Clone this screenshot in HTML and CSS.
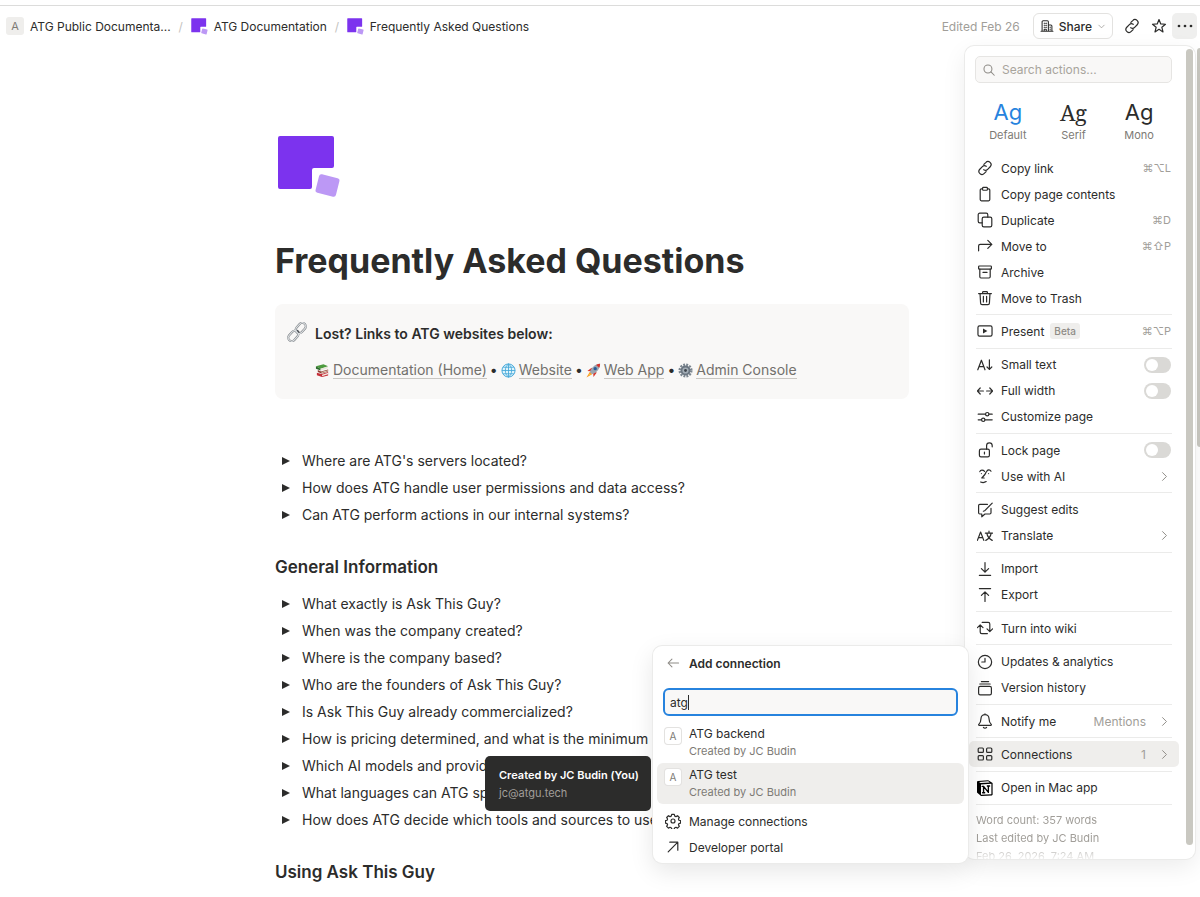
FILE: index.html
```html
<!DOCTYPE html>
<html lang="en">
<head>
    <meta charset="UTF-8">
    <meta name="viewport" content="width=device-width, initial-scale=1.0">
    <title>Frequently Asked Questions</title>
    <link rel="stylesheet" href="styles.css">
</head>
<body>
    <!-- Shared icons -->
    <svg class="sprite" aria-hidden="true">
        <symbol id="logo" viewBox="0 0 64 64">
            <path fill="#7c33ee" d="M3 1h52a2 2 0 0 1 2 2v28a2 2 0 0 1-2 2H37a2 2 0 0 0-2 2v17a2 2 0 0 1-2 2H3a2 2 0 0 1-2-2V3a2 2 0 0 1 2-2z"/>
            <rect fill="#bc98f5" x="40" y="41" width="21" height="19" rx="2.5" transform="rotate(14 50.5 50.5)"/>
        </symbol>
        <symbol id="link" viewBox="0 0 20 20">
            <path d="M8.600 5.500l2.300-2.300a3.700 3.700 0 0 1 5.600 5.200l-3.200 3.300a3.700 3.700 0 0 1-4.800.4"/>
            <path d="M11.400 14.500l-2.300 2.300a3.700 3.700 0 0 1-5.600-5.200l3.200-3.300a3.700 3.700 0 0 1 4.800-.4"/>
        </symbol>
        <symbol id="chevron" viewBox="0 0 20 20"><path d="M7 4l6 6-6 6"/></symbol>
    </svg>

    <header class="topbar">
        <nav class="breadcrumb" aria-label="Breadcrumb">
            <a href="#" class="crumb"><span class="letter">A</span>ATG Public Documenta...</a>
            <span class="slash">/</span>
            <a href="#" class="crumb"><svg class="crumb-logo"><use href="#logo"/></svg>ATG Documentation</a>
            <span class="slash">/</span>
            <a href="#" class="crumb"><svg class="crumb-logo"><use href="#logo"/></svg>Frequently Asked Questions</a>
        </nav>
        <div class="tools">
            <span class="edited">Edited Feb 26</span>
            <button class="share">
                <svg class="icon small" viewBox="0 0 20 20"><path d="M1.500 17.500h17M3 17.500V4a1.500 1.500 0 0 1 1.500-1.500h6A1.500 1.500 0 0 1 12 4v13.500M12 8.500h3.500A1.500 1.500 0 0 1 17 10v7.500M6 17.500v-3h3v3M6 6h1M8.500 6h1M6 9h1M8.500 9h1M6 11.800h1M8.500 11.800h1M14.500 11.500v1M14.500 14.500v1"/></svg>
                Share
                <svg class="icon caret" viewBox="0 0 20 20"><path d="M4 7l6 6 6-6"/></svg>
            </button>
            <button class="tool" aria-label="Copy link"><svg class="icon"><use href="#link"/></svg></button>
            <button class="tool" aria-label="Favorite"><svg class="icon" viewBox="0 0 20 20"><path d="M10 1.900l2.200 5.500 5.900.4-4.500 3.800 1.400 5.800-5-3.200-5 3.200 1.400-5.800L1.900 7.800l5.900-.4z"/></svg></button>
            <button class="tool active" aria-label="More"><svg class="icon solid" viewBox="0 0 20 20"><circle cx="2.500" cy="10" r="1.700"/><circle cx="10" cy="10" r="1.700"/><circle cx="17.500" cy="10" r="1.700"/></svg></button>
        </div>
    </header>

    <main class="page">
        <article class="content">
            <svg class="page-logo"><use href="#logo"/></svg>
            <h1>Frequently Asked Questions</h1>

            <section class="callout">
                <svg class="callout-icon" viewBox="0 0 20 20">
                    <g fill="none" stroke="#777c81" stroke-width="2.200"><rect x="8" y="2.600" width="11.500" height="7" rx="3.500" transform="rotate(-48 13.700 6.100)"/><rect x="0.500" y="10.400" width="11.500" height="7" rx="3.500" transform="rotate(-48 6.300 13.900)"/></g>
                    <g fill="none" stroke="#dfe2e4" stroke-width="1.100"><rect x="8" y="2.600" width="11.500" height="7" rx="3.500" transform="rotate(-48 13.700 6.100)"/><rect x="0.500" y="10.400" width="11.500" height="7" rx="3.500" transform="rotate(-48 6.300 13.900)"/></g>
                    <path d="M10.500 8.500l1.500 1.800" stroke="#4d5156" stroke-width="1.400" stroke-linecap="round"/>
                </svg>
                <div class="callout-body">
                    <p class="callout-title">Lost? Links to ATG websites below:</p>
                    <p class="callout-links">
                        <svg class="emoji" viewBox="0 0 16 16"><path fill="#4d9a3e" d="M1 3.500l8-2.300 5 2.300-8 2.600z"/><path fill="#2c6b2c" d="M1 3.500l5 2.600v2L1 6z"/><path fill="#e8e4da" d="M6 6.100l7.500-2.400v1.800L6 8z"/><path fill="#8d3f35" d="M3 7.500l3.500 1.500 7.500-2v2l-7 2.200-4-1.700z"/><path fill="#f0dfc8" d="M7 9.600l7-2v1l-7 2z"/><path fill="#c62f39" d="M2 10.300l5 1.500 7-2.100v3.500L7.500 15 2 13z"/><path fill="#f1e5dd" d="M7.500 12.500l6.500-2v1.500l-6.500 2z"/></svg>
                        <a href="#">Documentation (Home)</a> <span>•</span>
                        <svg class="emoji" viewBox="0 0 16 16"><circle cx="8" cy="8" r="7" fill="#dff4fc" stroke="#43a6d8"/><path d="M8 1v14M1 8h14M2.300 4.500h11.400M2.300 11.500h11.400M8 1C3.500 4 3.500 12 8 15M8 1c4.500 3 4.500 11 0 14" fill="none" stroke="#43a6d8" stroke-width=".9"/></svg>
                        <a href="#">Website</a> <span>•</span>
                        <svg class="emoji" viewBox="0 0 16 16"><path fill="#d8342c" d="M1.500 8.500L6 5l1.500 4zM8 15l3.500-5-4-1z"/><path fill="#9aa6b2" d="M4 10C5.500 5 9.500 1 15 .8 15.200 6 11.500 10.500 6.500 12z"/><path fill="#d8342c" d="M10.800 2.200A8 8 0 0 1 15 .8a8 8 0 0 1-.9 4.200z"/><circle cx="9.800" cy="6" r="1.800" fill="#275b94"/><path fill="#f79420" d="M4 9.700l2.500 2.300L.5 15.500z"/><path fill="#ffd33d" d="M4.200 10.800l1.100 1.100L2.500 13.500z"/></svg>
                        <a href="#">Web App</a> <span>•</span>
                        <svg class="emoji" viewBox="0 0 16 16"><circle cx="8" cy="8" r="6.200" fill="none" stroke="#7b8690" stroke-width="2.600" stroke-dasharray="2 1.250"/><circle cx="8" cy="8" r="4.300" fill="#a3adb6" stroke="#6b7681" stroke-width="2"/><circle cx="8" cy="8" r="1.500" fill="#3c444c"/></svg>
                        <a href="#">Admin Console</a>
                    </p>
                </div>
            </section>

            <div class="toggles">
                <details><summary>Where are ATG's servers located?</summary></details>
                <details><summary>How does ATG handle user permissions and data access?</summary></details>
                <details><summary>Can ATG perform actions in our internal systems?</summary></details>
            </div>

            <h2>General Information</h2>
            <div class="toggles">
                <details><summary>What exactly is Ask This Guy?</summary></details>
                <details><summary>When was the company created?</summary></details>
                <details><summary>Where is the company based?</summary></details>
                <details><summary>Who are the founders of Ask This Guy?</summary></details>
                <details><summary>Is Ask This Guy already commercialized?</summary></details>
                <details><summary>How is pricing determined, and what is the minimum s</summary></details>
                <details><summary>Which AI models and providers does ATG use</summary></details>
                <details><summary>What languages can ATG speak?</summary></details>
                <details><summary>How does ATG decide which tools and sources to use?</summary></details>
            </div>

            <h2>Using Ask This Guy</h2>
        </article>
    </main>
    <div class="page-scroll"></div>

    <!-- Page actions menu -->
    <aside class="menu">
        <div class="menu-body">
            <label class="search">
                <svg class="icon" viewBox="0 0 20 20"><circle cx="8.500" cy="8.500" r="5.700"/><path d="M12.800 12.800l4.700 4.700"/></svg>
                <input type="text" placeholder="Search actions..." aria-label="Search actions">
            </label>
            <div class="fonts">
                <button class="font selected"><span class="sample">Ag</span>Default</button>
                <button class="font"><span class="sample serif">Ag</span>Serif</button>
                <button class="font"><span class="sample mono">Ag</span>Mono</button>
            </div>

            <div class="groups">
                <div class="group">
                    <button class="item"><svg class="icon"><use href="#link"/></svg>Copy link<kbd>⌘⌥L</kbd></button>
                    <button class="item"><svg class="icon" viewBox="0 0 20 20"><path d="M7 3.500H5.500A1.500 1.500 0 0 0 4 5v12a1.500 1.500 0 0 0 1.500 1.500h9A1.500 1.500 0 0 0 16 17V5a1.500 1.500 0 0 0-1.500-1.500H13M7 2.800a1 1 0 0 1 1-1h4a1 1 0 0 1 1 1v1.500a1 1 0 0 1-1 1H8a1 1 0 0 1-1-1z"/></svg>Copy page contents</button>
                    <button class="item"><svg class="icon" viewBox="0 0 20 20"><rect x="6.500" y="6.500" width="12" height="12" rx="2"/><path d="M6.500 13.500h-3a2 2 0 0 1-2-2v-8a2 2 0 0 1 2-2h8a2 2 0 0 1 2 2v3"/></svg>Duplicate<kbd>⌘D</kbd></button>
                    <button class="item"><svg class="icon" viewBox="0 0 20 20"><path d="M2 16V10a2 2 0 0 1 2-2h14.500M13.500 3l5 5-5 5"/></svg>Move to<kbd>⌘⇧P</kbd></button>
                    <button class="item"><svg class="icon" viewBox="0 0 20 20"><rect x="2" y="2.500" width="16" height="4" rx="1"/><path d="M3.500 6.500V16A1.500 1.500 0 0 0 5 17.500h10a1.500 1.500 0 0 0 1.500-1.500V6.500M7.500 10.500h5"/></svg>Archive</button>
                    <button class="item"><svg class="icon" viewBox="0 0 20 20"><path d="M2 4.500h16M7 4.500V3a1 1 0 0 1 1-1h4a1 1 0 0 1 1 1v1.500M3.800 4.500l.7 12A1.800 1.800 0 0 0 6.300 18.200h7.400a1.800 1.800 0 0 0 1.800-1.700l.7-12M8 8v7M12 8v7"/></svg>Move to Trash</button>
                </div>
                <hr>
                <div class="group">
                    <button class="item"><svg class="icon" viewBox="0 0 20 20"><rect x="1.200" y="3.500" width="17.600" height="13" rx="2"/><path class="fill" d="M7.500 7v6l5.500-3z"/></svg>Present <span class="beta">Beta</span><kbd>⌘⌥P</kbd></button>
                </div>
                <hr>
                <div class="group">
                    <label class="item"><svg class="icon" viewBox="0 0 20 20"><path d="M1 16L5.500 4 10 16M2.500 12h6M15.500 3.500v12M12.500 12.500l3 3 3-3"/></svg>Small text<input type="checkbox" class="switch"></label>
                    <label class="item"><svg class="icon" viewBox="0 0 20 20"><path d="M8 10H.500M4 6.200L.300 10 4 13.800M12 10h7.500M16 6.200l3.700 3.800-3.700 3.800"/></svg>Full width<input type="checkbox" class="switch"></label>
                    <button class="item"><svg class="icon" viewBox="0 0 20 20"><path d="M1.500 6.500h9M15 6.500h4M1.500 13.500h4M10 13.500h9"/><circle cx="12.800" cy="6.500" r="2.100"/><circle cx="7.800" cy="13.500" r="2.100"/></svg>Customize page</button>
                </div>
                <hr>
                <div class="group">
                    <label class="item"><svg class="icon" viewBox="0 0 20 20"><rect x="3" y="9" width="12.500" height="9.500" rx="2"/><path d="M12 9V4.500a3.500 3.500 0 0 1 7 0V6M9.300 12.500v2.500"/></svg>Lock page<input type="checkbox" class="switch"></label>
                    <button class="item"><svg class="icon" viewBox="0 0 20 20"><path d="M3.500 4.500C4.500 2 7.500 2 9.500 4.200M12 4.500c1-2.500 4-3 5.500-.5M11.500 5c-1 3-2.800 4.500-5.500 7.500h3M4.500 17.500c2.500 1 5 .8 7-.500"/><circle class="fill" cx="5.500" cy="7" r=".7"/><circle class="fill" cx="14.500" cy="7" r=".7"/></svg>Use with AI<svg class="icon next"><use href="#chevron"/></svg></button>
                </div>
                <hr>
                <div class="group">
                    <button class="item"><svg class="icon" viewBox="0 0 20 20"><path d="M13 3H3.500A1.500 1.500 0 0 0 2 4.500v9A1.500 1.500 0 0 0 3.500 15H6v3.500L10 15h6a1.500 1.500 0 0 0 1.500-1.500V8M19 1.500L9.500 11l-1.500.5"/></svg>Suggest edits</button>
                    <button class="item"><svg class="icon" viewBox="0 0 20 20"><path d="M.500 15.500L4.500 5l4 10.500M2 12h5M10.500 6.500h9M15 4v2.500M12.300 6.500c.5 3.500 3 7 6.700 9M17.700 6.500c-.5 3.500-3 7-6.700 9"/></svg>Translate<svg class="icon next"><use href="#chevron"/></svg></button>
                </div>
                <hr>
                <div class="group">
                    <button class="item"><svg class="icon" viewBox="0 0 20 20"><path d="M10 2v12M5.500 9.500L10 14l4.500-4.500M3 18h14"/></svg>Import</button>
                    <button class="item"><svg class="icon" viewBox="0 0 20 20"><path d="M10 18V6M5.500 10.500L10 6l4.500 4.500M3 2h14"/></svg>Export</button>
                </div>
                <hr>
                <div class="group">
                    <button class="item"><svg class="icon" viewBox="0 0 20 20"><path d="M6.500 3H14a2 2 0 0 1 2 2v9M12.500 11l3.500 3.500 3.500-3.500M13 17H6a2 2 0 0 1-2-2V6.500M.500 9.500L4 6l3.500 3.500"/></svg>Turn into wiki</button>
                </div>
                <hr>
                <div class="group">
                    <button class="item"><svg class="icon" viewBox="0 0 20 20"><circle cx="10" cy="10" r="8.300"/><path d="M10 5.500V10H6"/></svg>Updates &amp; analytics</button>
                    <button class="item"><svg class="icon" viewBox="0 0 20 20"><rect x="2" y="8" width="16" height="10.500" rx="2"/><path d="M3.500 5h13M5.500 2h9"/></svg>Version history</button>
                </div>
                <hr>
                <div class="group">
                    <button class="item"><svg class="icon" viewBox="0 0 20 20"><path d="M10 2a5 5 0 0 0-5 5c0 4-1 5.500-2.800 7.200a.8.8 0 0 0 .6 1.300h14.400a.8.8 0 0 0 .6-1.300C16 12.500 15 11 15 7a5 5 0 0 0-5-5zM10 2V1M8 18a2.500 2.500 0 0 0 4 0"/></svg>Notify me<span class="value">Mentions</span><svg class="icon next"><use href="#chevron"/></svg></button>
                </div>
                <hr>
                <div class="group">
                    <button class="item current"><svg class="icon" viewBox="0 0 20 20"><rect x="1.500" y="2.500" width="6.500" height="5.500" rx="1.200"/><rect x="12" y="2.500" width="6.500" height="5.500" rx="1.200"/><rect x="1.500" y="12" width="6.500" height="5.500" rx="1.200"/><rect x="12" y="12" width="6.500" height="5.500" rx="1.200"/></svg>Connections<span class="value">1</span><svg class="icon next"><use href="#chevron"/></svg></button>
                </div>
                <hr>
                <div class="group">
                    <button class="item"><svg class="icon" viewBox="0 0 20 20"><path fill="#000" stroke="none" d="M0 2.500Q0 1.300 1.200 1.200L14 .300 19.500 3.800V18.200Q19.500 19.200 18.500 19.300L5 20 0 15.500z"/><path fill="#fff" stroke="none" d="M2.500 2.500L14 1.700l2 1.300-11.500.8zM5 5.500l13-.8v13l-13 .8z"/><path fill="none" stroke="#000" stroke-width="1.700" d="M8.200 15.800V8l6 7.500V7.500M6.500 8h2M7 16h2.600M12.900 7.500h2.800"/></svg>Open in Mac app</button>
                </div>
                <hr>
            </div>

            <footer class="meta">
                <p>Word count: 357 words</p>
                <p>Last edited by JC Budin</p>
                <p>Feb 26, 2026, 7:24 AM</p>
            </footer>
        </div>
        <div class="menu-scroll"></div>
    </aside>

    <!-- Add connection submenu -->
    <section class="submenu">
        <div class="submenu-head">
            <button class="back" aria-label="Back"><svg class="icon" viewBox="0 0 20 20"><path d="M18 10H3M8.500 4.500L3 10l5.500 5.500"/></svg></button>
            <h3>Add connection</h3>
        </div>
        <div class="field">
            <input type="text" value="atg" aria-label="Search connections" class="query" size="3">
            <span class="cursor"></span>
        </div>
        <button class="connection"><span class="letter outlined">A</span><span class="about">ATG backend<small>Created by JC Budin</small></span></button>
        <button class="connection current"><span class="letter outlined">A</span><span class="about">ATG test<small>Created by JC Budin</small></span></button>
        <div class="submenu-links">
            <a href="#" class="item"><svg class="icon" viewBox="0 0 20 20"><path d="M8.400 1.700h3.200l.6 2.200 1.500.6 2-1.100 2.200 2.200-1.100 2 .6 1.500 2.100.5v3l-2.100.6-.6 1.500 1.100 2-2.200 2.200-2-1.100-1.500.6-.6 2H8.400l-.6-2-1.500-.6-2 1.100-2.200-2.200 1.100-2-.6-1.500-2-.6v-3l2-.5.6-1.500-1.100-2 2.200-2.200 2 1.100 1.500-.6z"/><circle cx="10" cy="10" r="2.500"/></svg>Manage connections</a>
            <a href="#" class="item"><svg class="icon" viewBox="0 0 20 20"><path d="M4 16L16 4M6 4h10v10"/></svg>Developer portal</a>
        </div>
    </section>

    <div class="tooltip" role="tooltip">
        <strong>Created by JC Budin (You)</strong>
        <span>jc@atgu.tech</span>
    </div>
</body>
</html>
```
FILE: styles.css
```css
* {
    box-sizing: border-box;
}
body {
    position: relative;
    margin: 0;
    height: 100vh;
    overflow: hidden;
    font-family: Inter, "Liberation Sans", sans-serif;
    font-size: 12px;
    color: #2c2c2b;
    background: #fff;
}
h1, h2, h3, p { margin: 0; }
a { color: inherit; text-decoration: none; }
button, input, kbd {
    font: inherit;
    color: inherit;
}
button {
    border: none;
    background: none;
    padding: 0;
    cursor: pointer;
}
.sprite { display: none; }
.icon {
    width: 16px;
    height: 16px;
    flex: none;
    fill: none;
    stroke: currentColor;
    stroke-width: 1.5;
    stroke-linecap: round;
    stroke-linejoin: round;
}
.icon.solid, .fill { fill: currentColor; stroke: none; }

/* Top bar */
.topbar {
    display: flex;
    justify-content: space-between;
    align-items: center;
    height: 41px;
    margin-top: 5px;
    padding: 0 3px 0 6px;
    border-top: 1px solid #dcdcdb;
}
.breadcrumb, .crumb, .tools, .share {
    display: flex;
    align-items: center;
}
.breadcrumb { font-size: 12px; }
.crumb { gap: 6px; }
.slash {
    width: 20px;
    text-align: center;
    color: #c4c3c0;
}
.letter {
    display: flex;
    align-items: center;
    justify-content: center;
    width: 18px;
    height: 18px;
    border-radius: 3px;
    font-size: 11px;
    color: #7d7a75;
    background: #efeeec;
}
.crumb-logo { width: 17px; height: 17px; }
.edited {
    margin-right: 13px;
    color: #a19e99;
}
.share {
    gap: 5px;
    height: 26px;
    margin-right: 5px;
    padding: 0 6px;
    border: 1px solid #e3e2e0;
    border-radius: 6px;
    font-weight: 500;
}
.icon.small { width: 14px; height: 14px; }
.icon.caret { width: 9px; height: 9px; color: #8e8b86; }
.tool {
    display: flex;
    align-items: center;
    justify-content: center;
    width: 27px;
    height: 26px;
    border-radius: 5px;
}
.tool.active { width: 25px; background: #efefee; }

/* Document */
.page {
    padding: 89px 16px 0 0;
    color: #2c2c2b;
}
.content {
    max-width: 634px;
    margin: 0 auto;
    font-size: 14px;
}
.page-logo {
    display: block;
    width: 64px;
    height: 64px;
    margin-left: 2px;
}
h1 {
    margin: 39px 0 20px;
    font-size: 34px;
    line-height: 46px;
}
.callout {
    display: flex;
    gap: 8px;
    height: 95px;
    padding: 18px 12px;
    border-radius: 8px;
    background: #f9f8f7;
}
.callout-icon { width: 20px; height: 20px; }
.callout-title {
    line-height: 24px;
    font-weight: 600;
}
.callout-links {
    display: flex;
    align-items: center;
    gap: 3px;
    margin-top: 12px;
    line-height: 24px;
}
.callout-links a {
    line-height: 17px;
    color: #72706c;
    border-bottom: 1px solid #c9c7c3;
}
.emoji { width: 15px; height: 15px; }
.toggles summary {
    display: flex;
    align-items: center;
    gap: 12px;
    height: 27px;
    padding-left: 7px;
    white-space: nowrap;
    list-style: none;
    cursor: pointer;
}
.toggles summary::before {
    content: "";
    border-left: 8px solid #2c2c2b;
    border-top: 4px solid transparent;
    border-bottom: 4px solid transparent;
}
.callout + .toggles { margin-top: 48px; }
h2 {
    margin: 26px 0 10px;
    font-size: 17px;
    line-height: 26px;
    font-weight: 600;
}
.page-scroll {
    position: absolute;
    top: 48px;
    right: 0;
    width: 3px;
    height: 399px;
    border-radius: 3px 0 0 3px;
    background: #c9c8c1;
}

/* Actions menu */
.menu {
    position: absolute;
    top: 46px;
    right: 5px;
    bottom: 38px;
    display: flex;
    width: 230px;
    border-radius: 9px;
    overflow: hidden;
    background: #fff;
    box-shadow: 0 0 0 1px #ebebea, 0 8px 24px rgba(0,0,0,0.08);
}
.menu-body {
    flex: 1;
    min-width: 0;
    display: flex;
    flex-direction: column;
    padding: 10px 0 0 4px;
}
.search {
    display: flex;
    align-items: center;
    gap: 6px;
    height: 27px;
    flex: none;
    margin: 0 14px 0 6px;
    padding: 0 6px;
    border: 1px solid #e6e5e3;
    border-radius: 5px;
    background: #f9f8f7;
}
.search .icon { width: 14px; height: 14px; color: #8e8b86; }
.search input {
    flex: 1;
    min-width: 0;
    border: none;
    outline: none;
    padding: 0;
    background: none;
}
.search input::placeholder { color: #a8a49c; }
.fonts {
    display: grid;
    grid-template-columns: repeat(3, 1fr);
    margin: 14px 14px 11px 6px;
}
.font {
    font-size: 11px;
    line-height: 16px;
    color: #7d7a75;
}
.sample {
    display: block;
    font-size: 22px;
    line-height: 30px;
    color: #2c2c2b;
}
.selected .sample { color: #2783de; }
.serif { font-family: "Noto Serif", "DejaVu Serif", "Liberation Serif", serif; }
.groups {
    flex: 1;
    display: flex;
    flex-direction: column;
    justify-content: space-between;
    padding-top: 1px;
}
.item {
    display: flex;
    align-items: center;
    gap: 8px;
    width: 100%;
    height: 26px;
    padding: 0 8px;
    border-radius: 5px;
    text-align: left;
    white-space: nowrap;
}
.menu .item { width: auto; margin-right: 7px; }
.group {
    display: flex;
    flex-direction: column;
}
.item kbd, .value, .next, .switch { margin-left: auto; }
.value + .next { margin-left: 4px; }
.icon.next { width: 13px; height: 13px; color: #8e8b86; }
.item kbd {
    font-family: Inter, "DejaVu Sans", sans-serif;
    font-size: 11px;
    color: #a19e99;
}
.value { color: #a19e99; }
.current { background: #efeeec; }
.beta {
    margin-left: -2px;
    padding: 0 4px;
    border-radius: 3px;
    font-size: 10px;
    line-height: 16px;
    font-weight: 500;
    color: #8e8b86;
    background: #efeeec;
}
.switch {
    appearance: none;
    display: flex;
    width: 27px;
    height: 16px;
    margin-top: 0;
    margin-right: 0;
    margin-bottom: 0;
    padding: 2px;
    border-radius: 8px;
    background: #dad9d6;
}
.switch::before {
    content: "";
    width: 12px;
    height: 12px;
    border-radius: 50%;
    background: #fff;
}
.switch:checked {
    justify-content: flex-end;
    background: #2783de;
}
.menu hr {
    margin: 3px 14px 3px 7px;
    border: none;
    border-top: 1px solid #ebebea;
}
.meta {
    height: 51px;
    margin-left: 7px;
    overflow: hidden;
    padding-top: 3px;
    font-size: 11px;
    line-height: 18px;
    color: #a19e99;
    mask-image: linear-gradient(#000 34px, transparent 54px);
}
.menu-scroll {
    width: 7px;
    margin: 3px 2px 14px 0;
    border-radius: 4px;
    background: #c9c8c1;
}

/* Connection picker */
.submenu {
    position: absolute;
    right: 232px;
    bottom: 34px;
    width: 315px;
    padding: 4px 4px 3px;
    border-radius: 9px;
    background: #fff;
    box-shadow: 0 0 0 1px #ebebea, 0 8px 24px rgba(0,0,0,0.1);
}
.submenu-head {
    display: flex;
    align-items: center;
    gap: 9px;
    height: 26px;
    padding-left: 9px;
}
.back { display: flex; color: #8e8b86; }
.back .icon { width: 14px; height: 14px; }
h3 {
    font-size: 12px;
    font-weight: 600;
}
.field {
    display: flex;
    align-items: center;
    height: 28px;
    margin: 12px 6px 6px;
    padding: 0 5px;
    border: 2px solid #2783de;
    border-radius: 6px;
    background: #f9f8f7;
}
.query {
    field-sizing: content;
    border: none;
    outline: none;
    padding: 0;
    background: none;
}
.cursor {
    width: 1px;
    height: 15px;
    background: #2c2c2b;
}
.connection {
    display: flex;
    align-items: flex-start;
    gap: 8px;
    width: 100%;
    height: 41px;
    padding: 3px 8px;
    border-radius: 6px;
    text-align: left;
}
.letter.outlined {
    width: 16px;
    height: 16px;
    margin-top: 3px;
    font-size: 10px;
    background: #fff;
    box-shadow: 0 0 0 1px #e3e2e0;
}
.about { line-height: 18px; }
.about small {
    display: block;
    font-size: 11px;
    line-height: 16px;
    color: #7d7a75;
}
.submenu-links { margin-top: 4px; }

.tooltip {
    position: absolute;
    right: 549px;
    bottom: 86px;
    width: 166px;
    padding: 10px 14px 9px;
    border-radius: 5px;
    font-size: 11px;
    line-height: 18px;
    color: #fff;
    background: #2c2c2b;
    white-space: nowrap;
}
.tooltip strong { display: block; font-weight: 600; }
.tooltip span { color: #a19e99; }
```
